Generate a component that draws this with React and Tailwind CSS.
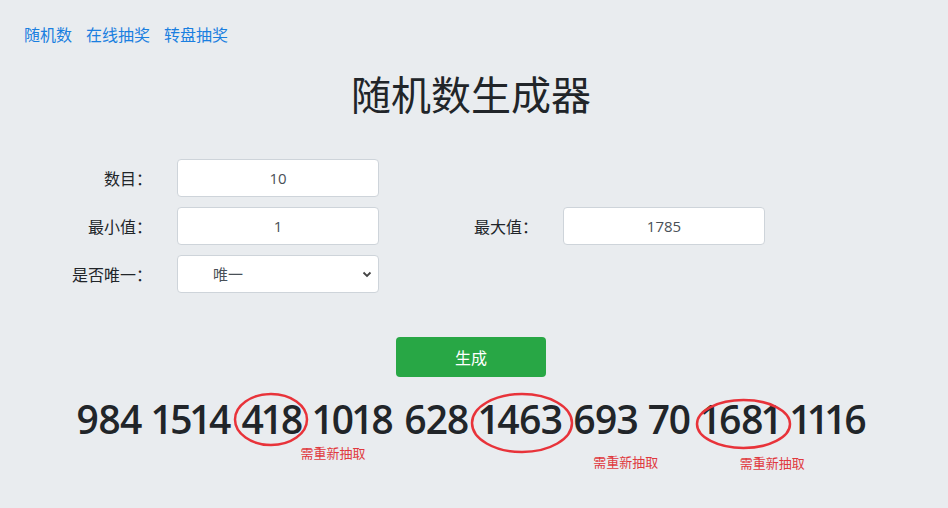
import React from "react";

const labelCls =
  "absolute left-1/2 whitespace-nowrap font-['Noto_Sans_CJK_SC',sans-serif] text-[13px] font-normal leading-[16px] tracking-normal text-[#e0393e]";

export default function App() {
  return (
    <div className="min-h-screen w-full bg-[#e9ecef] font-['Noto_Sans_CJK_SC','Noto_Sans',sans-serif] text-[#212529]">
      <nav className="flex gap-[14px] pl-[24px] pt-[24px] text-[16px] leading-[20px] text-[#1a7fe0]">
        <a>随机数</a>
        <a>在线抽奖</a>
        <a>转盘抽奖</a>
      </nav>

      <h1 className="mt-[25px] mr-[6px] text-center text-[40px] font-normal leading-[48px] text-[#212529]">
        随机数生成器
      </h1>

      <div className="mt-[42px] grid grid-cols-[177px_202px_184px_202px] gap-y-[10px] text-[16px]">
        <label className="flex h-[38px] items-center justify-end pr-[25px]">数目：</label>
        <input
          readOnly
          value="10"
          className="h-[38px] rounded-[4px] border border-[#ced4da] bg-white text-center font-['Open_Sans',sans-serif] text-[15px] text-[#495057] outline-none"
        />
        <div />
        <div />

        <label className="flex h-[38px] items-center justify-end pr-[25px]">最小值：</label>
        <input
          readOnly
          value="1"
          className="h-[38px] rounded-[4px] border border-[#ced4da] bg-white text-center font-['Open_Sans',sans-serif] text-[15px] text-[#495057] outline-none"
        />
        <label className="flex h-[38px] items-center justify-end pr-[25px]">最大值：</label>
        <input
          readOnly
          value="1785"
          className="h-[38px] rounded-[4px] border border-[#ced4da] bg-white text-center font-['Open_Sans',sans-serif] text-[15px] text-[#495057] outline-none"
        />

        <label className="flex h-[38px] items-center justify-end pr-[25px]">是否唯一：</label>
        <div className="relative flex h-[38px] items-center rounded-[4px] border border-[#ced4da] bg-white pl-[35px] text-[15px] text-[#495057]">
          <span>唯一</span>
          <svg className="absolute right-[6px] top-[14px]" width="10" height="8" viewBox="0 0 10 8">
            <path d="M1.5 2.5 L5 6 L8.5 2.5" fill="none" stroke="#444" strokeWidth="1.8" />
          </svg>
        </div>
        <div />
        <div />
      </div>

      <div className="mt-[44px] mr-[6px] flex justify-center">
        <button className="h-[40px] w-[150px] rounded-[4px] bg-[#28a745] text-[16px] text-white">
          生成
        </button>
      </div>

      <div className="mt-[18px] mr-[6px] flex justify-center gap-x-[11px] font-['Open_Sans',sans-serif] text-[39px] font-semibold leading-[48px] tracking-[-1px] text-[#212529] proportional-nums">
        <span>984</span>
        <span>1514</span>
        <span className="relative">
          418
          <svg className="pointer-events-none absolute left-1/2 top-[-4.5px] ml-[-40.5px]" width="78" height="57">
            <ellipse cx="39" cy="28.5" rx="36" ry="25.5" fill="none" stroke="#e8333a" strokeWidth="2.5" />
          </svg>
          <span className={labelCls + " top-[50px] ml-[28.5px]"}>需重新抽取</span>
        </span>
        <span>1018</span>
        <span>628</span>
        <span className="relative">
          1463
          <svg className="pointer-events-none absolute left-1/2 top-[-4.5px] ml-[-51.5px]" width="106" height="64">
            <ellipse cx="53" cy="32" rx="50" ry="29" fill="none" stroke="#e8333a" strokeWidth="2.5" />
          </svg>
        </span>
        <span className="relative">
          693
          <span className={labelCls + " top-[59px] ml-[-12px]"}>需重新抽取</span>
        </span>
        <span>70</span>
        <span className="relative">
          1681
          <svg className="pointer-events-none absolute left-1/2 top-[1.5px] ml-[-47px]" width="99" height="54">
            <ellipse cx="49.5" cy="27" rx="46.5" ry="24" fill="none" stroke="#e8333a" strokeWidth="2.5" />
          </svg>
          <span className={labelCls + " top-[59.5px] ml-[-1px]"}>需重新抽取</span>
        </span>
        <span>1116</span>
      </div>
    </div>
  );
}
